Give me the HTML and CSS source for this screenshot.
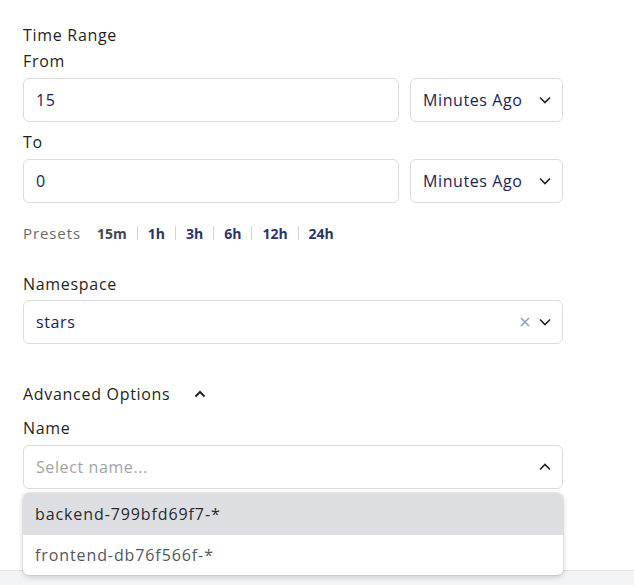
FILE: index.html
```html
<!DOCTYPE html>
<html>
<head>
<meta charset="utf-8">
<link rel="stylesheet" href="styles.css">
</head>
<body>
<div class="page">
  <div class="form">
    <div class="section-title">Time Range</div>
    <div class="label label-first">From</div>
    <div class="row">
      <div class="field field-input">15</div>
      <div class="field field-select">
        <span>Minutes Ago</span>
        <svg class="chev" width="12" height="8" viewBox="0 0 12 8"><path d="M1 1.5 L6 6.5 L11 1.5" fill="none" stroke="#222" stroke-width="1.6"/></svg>
      </div>
    </div>
    <div class="label">To</div>
    <div class="row">
      <div class="field field-input">0</div>
      <div class="field field-select">
        <span>Minutes Ago</span>
        <svg class="chev" width="12" height="8" viewBox="0 0 12 8"><path d="M1 1.5 L6 6.5 L11 1.5" fill="none" stroke="#222" stroke-width="1.6"/></svg>
      </div>
    </div>
    <div class="presets">
      <span class="presets-label">Presets</span>
      <span class="preset preset-active">15m</span>
      <span class="sep"></span>
      <span class="preset">1h</span>
      <span class="sep"></span>
      <span class="preset">3h</span>
      <span class="sep"></span>
      <span class="preset">6h</span>
      <span class="sep"></span>
      <span class="preset">12h</span>
      <span class="sep"></span>
      <span class="preset">24h</span>
    </div>
    <div class="label label-ns">Namespace</div>
    <div class="field field-full">
      <span>stars</span>
      <span class="icons">
        <svg width="10" height="10" viewBox="0 0 10 10"><path d="M1 1 L9 9 M9 1 L1 9" stroke="#8fa0b5" stroke-width="1.5"/></svg>
        <svg class="chev" width="12" height="8" viewBox="0 0 12 8"><path d="M1 1.5 L6 6.5 L11 1.5" fill="none" stroke="#222" stroke-width="1.6"/></svg>
      </span>
    </div>
    <div class="advanced">
      <span>Advanced Options</span>
      <svg width="12" height="8" viewBox="0 0 12 8"><path d="M1.5 6.5 L6 2 L10.5 6.5" fill="none" stroke="#222" stroke-width="2"/></svg>
    </div>
    <div class="label label-name">Name</div>
    <div class="combo">
      <div class="field field-full">
        <span class="placeholder">Select name...</span>
        <svg class="chev" width="12" height="8" viewBox="0 0 12 8"><path d="M1 6.5 L6 1.5 L11 6.5" fill="none" stroke="#222" stroke-width="1.6"/></svg>
      </div>
      <div class="menu">
        <div class="option option-hover">backend-799bfd69f7-*</div>
        <div class="option">frontend-db76f566f-*</div>
      </div>
    </div>
  </div>
  <div class="footer"></div>
</div>
</body>
</html>
```
FILE: styles.css
```css
* { box-sizing: border-box; }
html, body { margin: 0; padding: 0; background: #fff; }
body {
  font-family: "Open Sans", "Noto Sans", sans-serif;
  color: #1f2328;
  width: 634px;
  height: 585px;
  overflow: hidden;
}
.page { display: flex; flex-direction: column; height: 585px; }
.form {
  width: 563px;
  padding: 24px 0 0 23px;
  height: 570px;
  display: flex;
  flex-direction: column;
}
.section-title, .label, .advanced {
  font-size: 16px;
  line-height: 22px;
  color: #1f1f1f;
  letter-spacing: 0.7px;
}
.label { margin-top: 9px; margin-bottom: 6px; }
.label-first { margin-top: 4px; }
.row { display: flex; gap: 11px; }
.field {
  height: 44px;
  border: 1px solid #dcdcdc;
  border-radius: 6px;
  display: flex;
  align-items: center;
  padding: 0 12px;
  font-size: 16px;
  color: #1c2452;
  background: #fff;
  letter-spacing: 0.6px;
}
.field-input { width: 376px; }
.field-select { width: 153px; justify-content: space-between; padding-right: 11px; }
.field-full { width: 540px; justify-content: space-between; padding-right: 11px; }
.chev { display: block; }
.icons { display: flex; align-items: center; gap: 9px; }
.presets {
  margin-top: 20px;
  height: 20px;
  display: flex;
  align-items: center;
  font-size: 15px;
}
.presets-label { color: #6b6b6b; margin-right: 16px; letter-spacing: 0.9px; }
.preset { font-weight: 700; font-size: 14px; color: #2c3566; letter-spacing: 0; }
.preset-active { color: #45464d; }
.sep { width: 1px; height: 14px; background: #d8d2cc; margin: 0 10px; }
.label-ns { margin-top: 30px; margin-bottom: 5px; }
.advanced {
  margin-top: 39px;
  display: flex;
  align-items: center;
  gap: 24px;
}
.label-name { margin-top: 12px; }
.placeholder { color: #a3a3a3; }
.combo { position: relative; }
.menu {
  position: absolute;
  top: 48px;
  left: 0;
  width: 540px;
  background: #fff;
  border-radius: 6px;
  box-shadow: 0 2px 6px rgba(0,0,0,0.18), 0 0 0 1px rgba(0,0,0,0.05);
  overflow: hidden;
  z-index: 2;
}
.option {
  height: 40px;
  display: flex;
  align-items: center;
  padding: 0 12px;
  font-size: 16px;
  color: #55555a;
  letter-spacing: 0.9px;
}
.option-hover { height: 42px; background: #dddee1; color: #2a2a2e; }
.footer {
  flex: 1;
  background: #f3f4f6;
  border-top: 1px solid #e3e4e7;
}
```
